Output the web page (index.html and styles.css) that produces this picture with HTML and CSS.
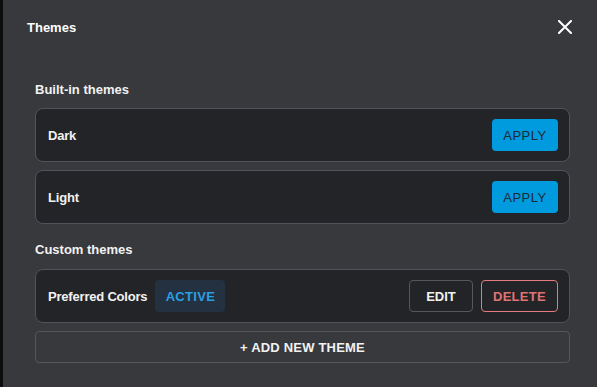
FILE: index.html
```html
<!DOCTYPE html>
<html lang="en">
<head>
    <meta charset="UTF-8">
    <meta name="viewport" content="width=device-width, initial-scale=1.0">
    <title>Themes</title>
    <link rel="stylesheet" href="styles.css">
</head>
<body>
    <div class="backdrop-strip"></div>

    <div class="modal">
        <div class="modal-header">
            <h1>Themes</h1>
            <button class="close-btn" aria-label="Close">
                <svg width="14" height="14" viewBox="0 0 14 14">
                    <path d="M1 1 L13 13 M13 1 L1 13" stroke="#ffffff" stroke-width="2" stroke-linecap="square"/>
                </svg>
            </button>
        </div>

        <div class="modal-body">
            <div class="section">
                <h2>Built-in themes</h2>
                <div class="theme-card">
                    <span class="theme-name">Dark</span>
                    <button class="apply-btn">APPLY</button>
                </div>
                <div class="theme-card">
                    <span class="theme-name">Light</span>
                    <button class="apply-btn">APPLY</button>
                </div>
            </div>

            <div class="section">
                <h2>Custom themes</h2>
                <div class="theme-card">
                    <span class="theme-name">Preferred Colors</span>
                    <span class="active-badge">ACTIVE</span>
                    <div class="card-actions">
                        <button class="edit-btn">EDIT</button>
                        <button class="delete-btn">DELETE</button>
                    </div>
                </div>
                <button class="add-btn">+ ADD NEW THEME</button>
            </div>
        </div>
    </div>
</body>
</html>
```

FILE: styles.css
```css
body {
    font-family: 'Liberation Sans', Arial, sans-serif;
    background-color: #38393d;
    color: #f2f2f2;
    margin: 0;
    padding: 0;
    display: flex;
    height: 387px;
    overflow: hidden;
}
.backdrop-strip {
    width: 3px;
    background-color: #0c0c0d;
}
.modal {
    flex: 1;
    background-color: #38393d;
}
.modal-header {
    height: 54px;
    display: flex;
    justify-content: space-between;
    align-items: center;
    padding: 0 25px 0 24px;
}
.modal-header h1 {
    margin: 0;
    font-size: 13px;
    font-weight: bold;
    color: #ffffff;
}
.close-btn {
    background: none;
    border: none;
    padding: 0;
    width: 14px;
    height: 14px;
    cursor: pointer;
    display: flex;
}
.modal-body {
    padding: 0 27px 0 32px;
}
.section {
    display: flex;
    flex-direction: column;
    gap: 8px;
}
.section:first-child {
    margin-top: 27px;
}
.section + .section {
    margin-top: 17px;
}
.section h2 {
    margin: 0 0 2px;
    font-size: 13px;
    line-height: 18px;
    font-weight: bold;
    color: #f2f2f2;
}
.section:first-child h2 {
    margin-bottom: 1px;
}
.theme-card {
    background-color: #232428;
    border: 1px solid #52535a;
    border-radius: 8px;
    height: 52px;
    padding: 0 11px 0 12px;
    display: flex;
    align-items: center;
    gap: 8px;
}
.theme-name {
    font-size: 13px;
    font-weight: bold;
    letter-spacing: -0.2px;
    color: #f2f2f2;
    flex: none;
}
.theme-card .apply-btn {
    margin-left: auto;
}
button {
    font-family: inherit;
    cursor: pointer;
}
.apply-btn {
    background-color: #009ade;
    color: #1b2a37;
    border: none;
    border-radius: 4px;
    width: 66px;
    height: 32px;
    font-size: 13px;
    letter-spacing: 0.5px;
    padding: 0;
}
.active-badge {
    background-color: #243140;
    color: #2a9fe2;
    border-radius: 4px;
    width: 70px;
    height: 32px;
    display: flex;
    align-items: center;
    justify-content: center;
    font-size: 13px;
    font-weight: bold;
    letter-spacing: 0.3px;
}
.card-actions {
    margin-left: auto;
    display: flex;
    gap: 8px;
}
.edit-btn,
.delete-btn {
    background: transparent;
    border-radius: 4px;
    height: 32px;
    font-size: 13px;
    font-weight: bold;
    padding: 0;
}
.edit-btn {
    width: 64px;
    border: 1px solid #56575c;
    color: #f2f2f2;
}
.delete-btn {
    width: 77px;
    border: 1px solid #e27b7b;
    color: #e07272;
    letter-spacing: 0.3px;
}
.add-btn {
    background: transparent;
    border: 1px solid #55565b;
    border-radius: 4px;
    height: 32px;
    color: #f2f2f2;
    font-size: 13px;
    font-weight: bold;
    letter-spacing: 0.2px;
    padding: 0;
}
```
